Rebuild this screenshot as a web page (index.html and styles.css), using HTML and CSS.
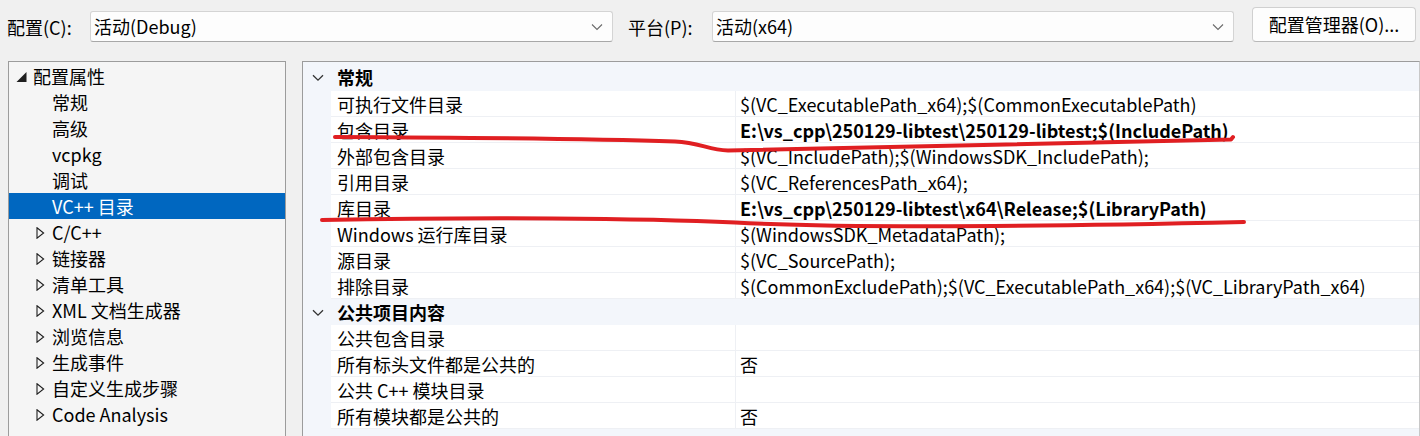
FILE: index.html
```html
<!DOCTYPE html>
<html lang="zh-CN">
<head>
<meta charset="utf-8">
<title>属性页</title>
<link rel="stylesheet" href="styles.css">
</head>
<body>
<div class="page">
  <div class="toolbar">
    <label class="tb-label lbl-config">配置(C):</label>
    <div class="combo combo-config"><span>活动(Debug)</span>
      <svg class="chev" width="12" height="8" viewBox="0 0 12 8"><path d="M1 1.5 L6 6.5 L11 1.5" fill="none" stroke="#6a6a6a" stroke-width="1.1"/></svg>
    </div>
    <label class="tb-label lbl-platform">平台(P):</label>
    <div class="combo combo-platform"><span>活动(x64)</span>
      <svg class="chev" width="12" height="8" viewBox="0 0 12 8"><path d="M1 1.5 L6 6.5 L11 1.5" fill="none" stroke="#6a6a6a" stroke-width="1.1"/></svg>
    </div>
    <button class="btn">配置管理器(O)...</button>
  </div>

  <div class="main">
    <div class="tree">
      <div class="tnode root">
        <svg class="exp" width="12" height="12" viewBox="0 0 12 12"><polygon points="10.5,1 10.5,11 0.5,11" fill="#1e1e1e"/></svg>
        <span>配置属性</span>
      </div>
      <div class="tnode leaf">常规</div>
      <div class="tnode leaf">高级</div>
      <div class="tnode leaf">vcpkg</div>
      <div class="tnode leaf">调试</div>
      <div class="tnode leaf selected">VC++ 目录</div>
      <div class="tnode coll"><svg class="tri" width="9" height="12" viewBox="0 0 9 12"><polygon points="1,0.8 7.6,6 1,11.2" fill="none" stroke="#1e1e1e" stroke-width="1.1"/></svg><span>C/C++</span></div>
      <div class="tnode coll"><svg class="tri" width="9" height="12" viewBox="0 0 9 12"><polygon points="1,0.8 7.6,6 1,11.2" fill="none" stroke="#1e1e1e" stroke-width="1.1"/></svg><span>链接器</span></div>
      <div class="tnode coll"><svg class="tri" width="9" height="12" viewBox="0 0 9 12"><polygon points="1,0.8 7.6,6 1,11.2" fill="none" stroke="#1e1e1e" stroke-width="1.1"/></svg><span>清单工具</span></div>
      <div class="tnode coll"><svg class="tri" width="9" height="12" viewBox="0 0 9 12"><polygon points="1,0.8 7.6,6 1,11.2" fill="none" stroke="#1e1e1e" stroke-width="1.1"/></svg><span>XML 文档生成器</span></div>
      <div class="tnode coll"><svg class="tri" width="9" height="12" viewBox="0 0 9 12"><polygon points="1,0.8 7.6,6 1,11.2" fill="none" stroke="#1e1e1e" stroke-width="1.1"/></svg><span>浏览信息</span></div>
      <div class="tnode coll"><svg class="tri" width="9" height="12" viewBox="0 0 9 12"><polygon points="1,0.8 7.6,6 1,11.2" fill="none" stroke="#1e1e1e" stroke-width="1.1"/></svg><span>生成事件</span></div>
      <div class="tnode coll"><svg class="tri" width="9" height="12" viewBox="0 0 9 12"><polygon points="1,0.8 7.6,6 1,11.2" fill="none" stroke="#1e1e1e" stroke-width="1.1"/></svg><span>自定义生成步骤</span></div>
      <div class="tnode coll"><svg class="tri" width="9" height="12" viewBox="0 0 9 12"><polygon points="1,0.8 7.6,6 1,11.2" fill="none" stroke="#1e1e1e" stroke-width="1.1"/></svg><span>Code Analysis</span></div>
    </div>

    <div class="grid">
      <div class="cat first">
        <svg class="cchev" width="12" height="8" viewBox="0 0 12 8"><path d="M1 1.2 L6 6.2 L11 1.2" fill="none" stroke="#333" stroke-width="1.3"/></svg>
        <span>常规</span>
      </div>
      <div class="row"><div class="name">可执行文件目录</div><div class="val">$(VC_ExecutablePath_x64);$(CommonExecutablePath)</div></div>
      <div class="row"><div class="name">包含目录</div><div class="val bold">E:\vs_cpp\250129-libtest\250129-libtest;$(IncludePath)</div></div>
      <div class="row"><div class="name">外部包含目录</div><div class="val">$(VC_IncludePath);$(WindowsSDK_IncludePath);</div></div>
      <div class="row"><div class="name">引用目录</div><div class="val">$(VC_ReferencesPath_x64);</div></div>
      <div class="row"><div class="name">库目录</div><div class="val bold">E:\vs_cpp\250129-libtest\x64\Release;$(LibraryPath)</div></div>
      <div class="row"><div class="name">Windows 运行库目录</div><div class="val">$(WindowsSDK_MetadataPath);</div></div>
      <div class="row"><div class="name">源目录</div><div class="val">$(VC_SourcePath);</div></div>
      <div class="row"><div class="name">排除目录</div><div class="val">$(CommonExcludePath);$(VC_ExecutablePath_x64);$(VC_LibraryPath_x64)</div></div>
      <div class="cat">
        <svg class="cchev" width="12" height="8" viewBox="0 0 12 8"><path d="M1 1.2 L6 6.2 L11 1.2" fill="none" stroke="#333" stroke-width="1.3"/></svg>
        <span>公共项目内容</span>
      </div>
      <div class="row"><div class="name">公共包含目录</div><div class="val"></div></div>
      <div class="row"><div class="name">所有标头文件都是公共的</div><div class="val">否</div></div>
      <div class="row"><div class="name">公共 C++ 模块目录</div><div class="val"></div></div>
      <div class="row"><div class="name">所有模块都是公共的</div><div class="val">否</div></div>
    </div>
  </div>

  <svg class="marks" width="1420" height="436" viewBox="0 0 1420 436">
    <path d="M335 137 C 450 137.5 600 139 675 141.5 C 700 142.5 708 150 728 150.5 C 820 150 1000 146 1231 139.5 L 1233 137" fill="none" stroke="#e01f22" stroke-width="4" stroke-linecap="round" stroke-linejoin="round"/>
    <path d="M322 220 C 480 217 640 218 735 222.5 C 820 227 1000 227.5 1244 222" fill="none" stroke="#e01f22" stroke-width="4" stroke-linecap="round" stroke-linejoin="round"/>
  </svg>
</div>
</body>
</html>
```

FILE: styles.css
```css
* { box-sizing: border-box; }
html, body {
  margin: 0;
  padding: 0;
}
body {
  width: 1420px;
  height: 436px;
  overflow: hidden;
  background: #f0f0f0;
  font-family: "Noto Sans CJK SC", "Noto Sans", sans-serif;
  font-size: 18px;
  color: #000;
}
.page {
  position: relative;
  width: 1420px;
  height: 436px;
}

/* toolbar */
.toolbar {
  height: 61px;
  display: flex;
  align-items: flex-start;
  padding-top: 7px;
}
.tb-label {
  height: 35px;
  line-height: 41px;
  white-space: nowrap;
}
.lbl-config { margin-left: 7px; width: 83px; }
.lbl-platform { margin-left: 15px; width: 84px; }
.combo {
  margin-top: 4px;
  height: 31px;
  background: #fdfdfd;
  border: 1px solid #d4d4d4;
  border-bottom-color: #a8a8a8;
  border-radius: 3px;
  display: flex;
  align-items: center;
  justify-content: space-between;
  padding: 0 9px 0 3px;
  line-height: 29px;
}
.combo-config { width: 523px; }
.combo-platform { width: 522px; }
.chev { flex: none; margin-top: 1px; }
.btn {
  margin-left: 18px;
  width: 164px;
  height: 35px;
  background: #fdfdfd;
  border: 1px solid #d0d0d0;
  border-bottom-color: #b8b8b8;
  border-radius: 4px;
  font-family: inherit;
  font-size: 18px;
  color: #000;
  padding: 0;
  line-height: 33px;
}

/* main */
.main {
  display: flex;
  align-items: flex-start;
  gap: 16px;
  padding-left: 8px;
}
.tree {
  width: 278px;
  height: 390px;
  background: #f5f5f5;
  border: 1px solid #9c9c9c;
  border-bottom: none;
  padding-top: 1px;
}
.tnode {
  height: 26px;
  line-height: 26px;
  white-space: nowrap;
  display: flex;
  align-items: center;
}
.tnode.root { padding-left: 7px; }
.tnode.root .exp { margin-right: 5px; margin-top: 1px; }
.tnode.leaf { padding-left: 43px; }
.tnode.coll { padding-left: 27px; }
.tnode.coll .tri { margin-right: 7px; margin-top: 1px; }
.tnode.selected {
  background: #0067c0;
  color: #fff;
}

.grid {
  width: 1118px;
  height: 390px;
  background: #f3f6fb;
  border: 1px solid #9c9c9c;
  border-bottom: none;
  border-right-color: #c8c8c8;
}
.cat {
  height: 26px;
  display: flex;
  align-items: center;
  font-weight: bold;
  padding-left: 9px;
  line-height: 26px;
}
.cat.first { height: 29px; padding-top: 1px; }
.cat .cchev { margin-right: 13px; margin-top: 1px; }
.row {
  height: 26px;
  display: flex;
  margin-left: 28px;
  background: #fff;
  border-bottom: 1px solid #eef0f4;
}
.row .name {
  width: 405px;
  padding-left: 6px;
  line-height: 26px;
  white-space: nowrap;
  border-right: 1px solid #eef0f4;
}
.row .val {
  flex: 1;
  padding-left: 4px;
  line-height: 26px;
  white-space: nowrap;
}
.row .val.bold { font-weight: bold; }

.marks {
  position: absolute;
  left: 0;
  top: 0;
  pointer-events: none;
}
```
